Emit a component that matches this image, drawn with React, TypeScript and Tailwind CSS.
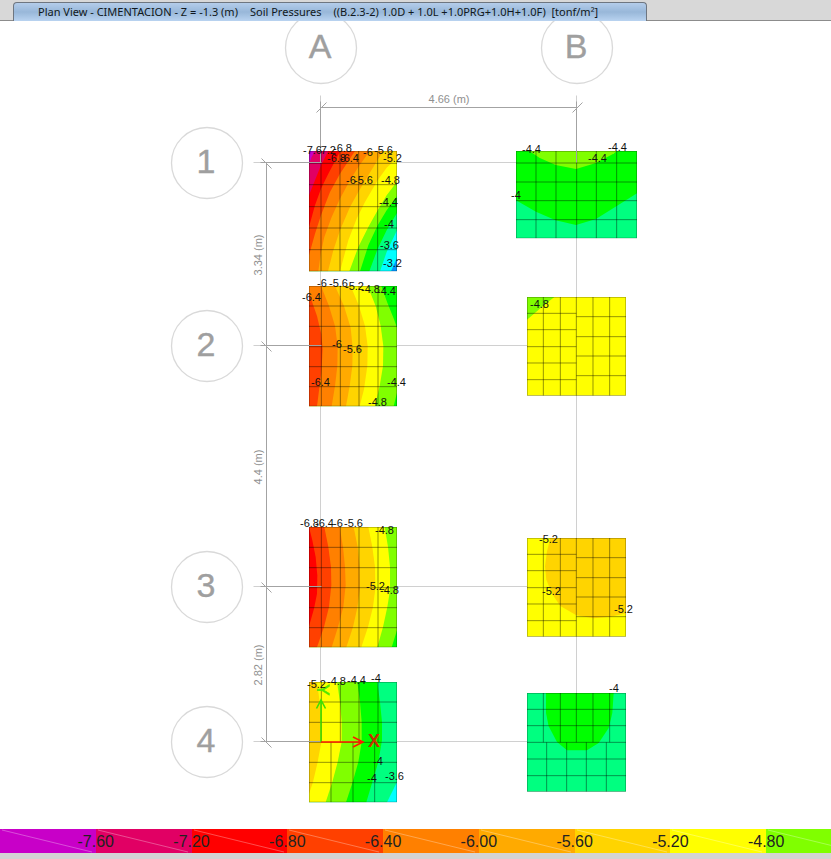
type Label = [text: string, x: number, y: number];
type Line = [x1: number, y1: number, x2: number, y2: number];

type Footing = {
    id: string;
    x: number;
    y: number;
    width: number;
    height: number;
    base: string;
    // painted in order, each one over the previous
    bands: [fill: string, points: string][];
    mesh: Line[];
};

const C = {
    purple: "#c800c8",
    pink: "#e10064",
    red: "#ff0000",
    vermilion: "#ff4000",
    orange: "#ff8000",
    amber: "#ffaa00",
    gold: "#ffd400",
    yellow: "#ffff00",
    lime: "#80ff00",
    green: "#00ff00",
    mint: "#00ff80",
    cyan: "#00ffff",
    blue: "#0098ff",
};

const v = (xs: number[], from: number, to: number): Line[] =>
    xs.map((x) => [x, from, x, to]);
const h = (ys: number[], from: number, to: number): Line[] =>
    ys.map((y) => [from, y, to, y]);

// Footing geometry is kept in thirds of a drawing unit
const footings: Footing[] = [
    {
        id: "A1",
        x: 309,
        y: 151,
        width: 264,
        height: 361,
        base: C.blue,
        bands: [
            [C.cyan, "0,0 264,0 264,320 246,361 0,361"],
            [C.mint, "0,0 264,0 264,238 233,303 213,361 0,361"],
            [C.green, "0,0 264,0 264,186 233,238 206,293 181,361 0,361"],
            [C.lime, "0,0 264,0 264,136 233,178 206,223 178,283 153,361 0,361"],
            [C.yellow, "0,0 264,0 264,92 233,133 206,178 178,228 148,288 121,361 0,361"],
            [C.gold, "0,0 264,0 264,20 233,50 206,88 168,153 143,203 118,268 93,361 0,361"],
            [C.amber, "0,0 222,0 206,27 178,73 148,123 123,168 93,238 73,298 57,361 0,361"],
            [C.orange, "0,0 182,0 148,48 123,88 93,143 68,198 46,258 36,303 28,361 0,361"],
            [C.vermilion, "0,0 138,0 93,68 63,123 36,193 18,248 0,313"],
            [C.red, "0,0 94,0 58,68 36,113 18,163 0,228"],
            [C.pink, "0,0 58,0 36,43 18,88 0,133"],
            [C.purple, "0,0 18,0 8,18 0,38"],
        ],
        mesh: [...v([36, 93, 149, 206], 0, 361), ...h([37, 101, 167, 231, 296], 0, 264)],
    },
    {
        id: "A2",
        x: 309,
        y: 286,
        width: 264,
        height: 361,
        base: C.green,
        bands: [
            [C.lime, "0,0 217,0 235,50 255,100 264,125 264,320 254,361 0,361"],
            [C.yellow, "0,0 176,0 200,60 215,120 223,180 222,240 212,300 198,361 0,361"],
            [C.gold, "0,0 125,0 150,60 168,120 176,180 175,240 165,310 152,361 0,361"],
            [C.amber, "0,0 78,0 105,60 125,125 131,185 130,240 122,300 111,361 0,361"],
            [C.orange, "0,0 36,0 60,60 78,120 86,180 85,240 78,300 68,361 0,361"],
            [C.vermilion, "0,20 24,90 37,145 41,190 37,260 24,361 0,361"],
        ],
        mesh: [...v([37, 94, 150, 207], 0, 361), ...h([60, 121, 182, 242, 302], 0, 264)],
    },
    {
        id: "A3",
        x: 309,
        y: 527,
        width: 264,
        height: 361,
        base: C.green,
        bands: [
            [C.lime, "0,0 264,0 264,310 248,361 0,361"],
            [C.yellow, "0,0 227,0 237,60 243,120 243,190 235,240 222,300 205,361 0,361"],
            [C.gold, "0,0 178,0 190,60 198,120 199,185 192,240 177,300 157,361 0,361"],
            [C.amber, "0,0 134,0 146,60 152,120 153,185 145,242 132,300 112,361 0,361"],
            [C.orange, "0,0 92,0 102,60 108,120 110,175 103,240 87,300 68,361 0,361"],
            [C.vermilion, "0,0 46,0 58,60 66,120 67,175 60,240 45,300 24,361 0,361"],
            [C.red, "0,0 10,40 20,90 25,145 24,200 15,245 0,298"],
        ],
        mesh: [...v([37, 94, 150, 207], 0, 361), ...h([61, 122, 182, 242, 302], 0, 264)],
    },
    {
        id: "A4",
        x: 309,
        y: 682,
        width: 264,
        height: 361,
        base: C.cyan,
        bands: [
            [C.mint, "0,0 264,0 264,300 234,361 0,361"],
            [C.green, "0,0 205,0 213,60 219,120 219,175 208,240 190,300 172,361 0,361"],
            [C.lime, "0,0 145,0 153,60 158,120 158,180 148,240 131,300 111,361 0,361"],
            [C.yellow, "0,0 84,0 93,60 98,120 98,180 86,240 70,300 50,361 0,361"],
            [C.gold, "0,0 24,0 32,60 38,120 38,175 26,240 12,300 0,335"],
        ],
        mesh: [
            ...v([37, 94, 150, 207], 0, 181),
            ...v([66, 132, 197], 181, 361),
            ...h([60, 121, 181, 241, 302], 0, 264),
        ],
    },
    {
        id: "B1",
        x: 516,
        y: 151,
        width: 363,
        height: 262,
        base: C.mint,
        bands: [
            [C.green, "0,0 363,0 363,127 301,166 240,204 180,222 119,208 60,182 0,148"],
            [C.lime, "40,0 70,20 119,42 180,54 240,36 295,7 302,0"],
        ],
        mesh: [...v([60, 120, 182, 241, 302], 0, 262), ...h([36, 93, 149, 206], 0, 363)],
    },
    {
        id: "B2",
        x: 527,
        y: 297,
        width: 297,
        height: 296,
        base: C.yellow,
        bands: [[C.lime, "0,0 82,0 49,26 0,68"]],
        mesh: [
            ...v([49, 100, 148, 198, 248], 0, 296),
            ...h([49, 98, 149, 198, 248], 0, 148),
            ...h([59, 119, 177, 236], 148, 297),
        ],
    },
    {
        id: "B3",
        x: 527,
        y: 538,
        width: 297,
        height: 296,
        base: C.yellow,
        bands: [
            [C.gold, "70,0 297,0 297,226 250,236 200,241 148,232 100,204 75,167 58,125 54,85 60,40"],
        ],
        mesh: [
            ...v([49, 100, 148, 198, 248], 0, 296),
            ...h([49, 98, 149, 198, 248], 0, 148),
            ...h([59, 119, 177, 236], 148, 297),
        ],
    },
    {
        id: "B4",
        x: 527,
        y: 693,
        width: 297,
        height: 296,
        base: C.mint,
        bands: [
            [C.green, "57,0 57,60 65,100 90,147 120,172 180,172 215,150 245,105 256,60 260,0"],
        ],
        mesh: [
            ...v([49, 100, 148, 198, 248], 0, 148),
            ...v([59, 119, 178, 238], 148, 296),
            ...h([49, 98, 148, 198, 248], 0, 297),
        ],
    },
];

const labels: Label[] = [
    ["-7.6", 303, 154], ["-7.2", 317, 154], ["-6.8", 333, 152],
    ["-6.8", 327, 162], ["-6.4", 340, 162], ["-6", 363, 156],
    ["-5.6", 374, 154], ["-5.2", 383, 162], ["-6", 346, 184],
    ["-5.6", 354, 184], ["-4.8", 381, 184], ["-4.4", 379, 206],
    ["-4", 384, 228], ["-3.6", 380, 249], ["-3.2", 383, 267],
    ["-6", 317, 287], ["-5.6", 329, 287], ["-5.2", 345, 290],
    ["-4.8", 361, 293], ["-4.4", 377, 295], ["-6.4", 302, 301],
    ["-6", 332, 348], ["-5.6", 343, 353], ["-6.4", 311, 386],
    ["-4.4", 387, 386], ["-4.8", 368, 406],
    ["-6.8", 300, 527], ["-6.4", 315, 527], ["-6", 333, 527],
    ["-5.6", 344, 527], ["-4.8", 375, 534], ["-5.2", 366, 590],
    ["-4.8", 380, 594],
    ["-5.2", 307, 688], ["-4.8", 327, 685], ["-4.4", 347, 684],
    ["-4", 371, 682], ["-4", 373, 765], ["-4", 367, 782],
    ["-3.6", 385, 780],
    ["-4.4", 522, 153], ["-4.4", 608, 151], ["-4.4", 588, 162],
    ["-4", 511, 199],
    ["-4.8", 530, 308],
    ["-5.2", 539, 543], ["-5.2", 542, 595], ["-5.2", 614, 613],
    ["-4", 609, 692],
];

const columns: [name: string, x: number][] = [
    ["A", 321],
    ["B", 577],
];

const rows: [name: string, y: number][] = [
    ["1", 163],
    ["2", 346],
    ["3", 587],
    ["4", 742],
];

const spans: [text: string, y: number][] = [
    ["3.34 (m)", 255],
    ["4.4 (m)", 467],
    ["2.82 (m)", 665],
];

const legend: [className: string, value: string | null][] = [
    ["bg-[#c800c8]", "-7.60"],
    ["bg-[#e10064]", "-7.20"],
    ["bg-[#ff0000]", "-6.80"],
    ["bg-[#ff4000]", "-6.40"],
    ["bg-[#ff8000]", "-6.00"],
    ["bg-[#ffaa00]", "-5.60"],
    ["bg-[#ffd400]", "-5.20"],
    ["bg-[#ffff00]", "-4.80"],
    ["bg-[#80ff00]", null],
];

function TitleTab() {
    return (
        <header className="flex h-[21px] items-end border-b border-[#8c8c8c] bg-[#d8d8d8] pl-[13px]">
            <h1 className="-mb-px flex h-[19px] items-center gap-3 whitespace-pre rounded-t border border-b-0 border-[#6e7680] bg-linear-to-b from-[#b4cdea] via-[#98b7d9] to-[#b9d3f0] pl-6 pr-12 font-['Noto_Sans',sans-serif] text-[11px] leading-4 text-[#101820]">
                <span>Plan View - CIMENTACION - Z = -1.3 (m)</span>
                <span>Soil Pressures</span>
                <span>((B.2.3-2) 1.0D + 1.0L +1.0PRG+1.0H+1.0F)  [tonf/m²]</span>
            </h1>
        </header>
    );
}

function FootingPlot({ footing }: { footing: Footing }) {
    const { x, y, width, height, base, bands, mesh } = footing;

    return (
        <svg
            x={x}
            y={y}
            width={width / 3}
            height={height / 3}
            viewBox={`0 0 ${width} ${height}`}
        >
            <rect width={width} height={height} fill={base} />
            {bands.map(([fill, points]) => (
                <polygon key={fill} points={points} fill={fill} />
            ))}
            <g stroke="#000" strokeOpacity="0.42" strokeWidth="3">
                {mesh.map(([x1, y1, x2, y2]) => (
                    <line key={`${x1}-${y1}-${x2}-${y2}`} x1={x1} y1={y1} x2={x2} y2={y2} />
                ))}
            </g>
            <rect
                width={width}
                height={height}
                fill="none"
                stroke="#000"
                strokeOpacity="0.35"
                strokeWidth="4"
            />
        </svg>
    );
}

function GridBubble({ name, x, y }: { name: string; x: number; y: number }) {
    return (
        <g>
            <circle cx={x} cy={y} r="35.5" fill="none" stroke="#d9d9d9" strokeWidth="1.3" />
            <text
                x={x - 1}
                y={y + 10}
                textAnchor="middle"
                fill="#9f9f9f"
                stroke="#9f9f9f"
                strokeWidth="0.4"
                className="text-[34px]"
            >
                {name}
            </text>
        </g>
    );
}

function PlanView() {
    return (
        <svg
            viewBox="0 21 831 808"
            className="block h-auto w-full bg-white font-['Liberation_Sans',sans-serif]"
        >
            {/* grid lines */}
            <g stroke="#d0d0d0" transform="translate(0.5 0.5)">
                {columns.map(([name, x]) => (
                    <line key={name} x1={x - 1} y1="95" x2={x - 1} y2="742" />
                ))}
                {rows.map(([name, y]) => (
                    <line key={name} x1="253" y1={y - 1} x2="577" y2={y - 1} />
                ))}
            </g>

            {footings.map((footing) => (
                <FootingPlot key={footing.id} footing={footing} />
            ))}

            {/* dimension lines */}
            <g stroke="#a3a3a3" transform="translate(0.5 0.5)">
                <line x1="321" y1="107" x2="577" y2="107" />
                <line x1="266" y1="163" x2="266" y2="742" />
                {columns.map(([name, x]) => (
                    <g key={name}>
                        <line x1={x - 1} y1="101" x2={x - 1} y2="162" />
                        <line x1={x - 5} y1="112" x2={x + 5} y2="102" />
                    </g>
                ))}
                {rows.map(([name, y]) => (
                    <g key={name}>
                        <line x1="260" y1={y - 1} x2="321" y2={y - 1} />
                        <line x1="261" y1={y - 5} x2="271" y2={y + 5} />
                    </g>
                ))}
            </g>
            <g fill="#8f8f8f" textAnchor="middle" className="text-[11px]">
                <text x="449" y="103">
                    4.66 (m)
                </text>
                {spans.map(([text, y]) => (
                    <text key={text} transform={`translate(262 ${y}) rotate(-90)`}>
                        {text}
                    </text>
                ))}
            </g>

            {columns.map(([name, x]) => (
                <GridBubble key={name} name={name} x={x} y={48} />
            ))}
            {rows.map(([name, y]) => (
                <GridBubble key={name} name={name} x={207} y={y} />
            ))}

            {/* global axes */}
            <g fill="none" strokeWidth="1.6">
                <path d="M321 742V700M316.500 708.500L321 700L325.500 708.500" stroke="#3fe000" />
                <path d="M321 742H363M353 737L363 742L353 747" stroke="#ff1a00" />
            </g>
            <text
                transform="translate(317 690) rotate(90)"
                textAnchor="middle"
                fill="#4fe800"
                stroke="#4fe800"
                strokeWidth="0.6"
                className="text-[17px]"
            >
                Y
            </text>
            <text
                x="374"
                y="747"
                textAnchor="middle"
                fill="#c83200"
                className="text-[18px] font-bold"
            >
                X
            </text>

            <g fill="#111" className="text-[11px]">
                {labels.map(([text, x, y]) => (
                    <text key={`${x}-${y}`} x={x} y={y}>
                        {text}
                    </text>
                ))}
            </g>
        </svg>
    );
}

function Legend() {
    return (
        <footer className="border-b-[6px] border-[#d4d4d4]">
            <ul className="grid grid-cols-[repeat(8,96fr)_65fr] overflow-hidden">
                {legend.map(([className, value]) => (
                    <li key={className} className={`relative h-6 ${className}`}>
                        <svg
                            viewBox="0 0 96 24"
                            preserveAspectRatio="xMinYMin slice"
                            className="absolute size-full"
                        >
                            <path d="M2 1L92 23" stroke="#fff" strokeOpacity="0.3" />
                        </svg>
                        {value && (
                            <span className="absolute right-0 z-10 translate-x-1/2 font-['Liberation_Sans',sans-serif] text-base leading-[26px] text-[#222]">
                                {value}
                            </span>
                        )}
                    </li>
                ))}
            </ul>
        </footer>
    );
}

function App() {
    return (
        <main className="bg-white">
            <TitleTab />
            <PlanView />
            <Legend />
        </main>
    );
}

export default App;
